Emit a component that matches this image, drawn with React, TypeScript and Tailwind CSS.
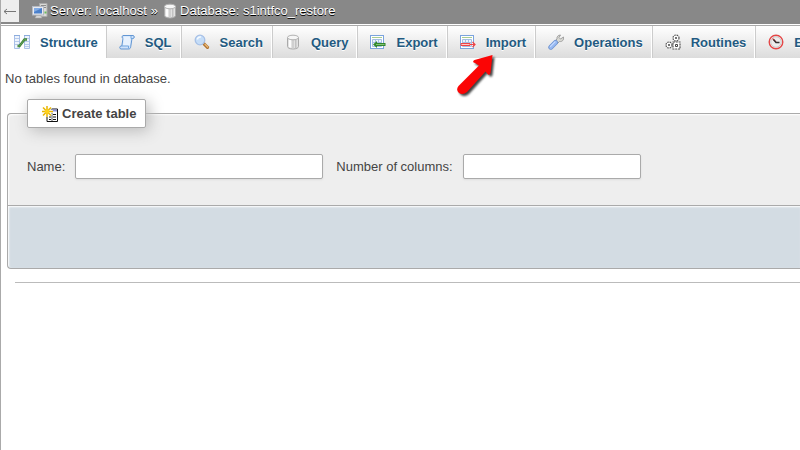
import type { ReactNode } from "react";

function Svg({ children }: { children: ReactNode }) {
  return (
    <svg width="16" height="16" viewBox="0 0 16 16" className="shrink-0" aria-hidden>
      {children}
    </svg>
  );
}

function ServerIcon() {
  return (
    <Svg>
      <path d="M7.500 .5h7.500v13H9z" fill="#dcdcd8" stroke="#aaa" />
      <path d="M9 2.500h5M9 4.500h5" stroke="#8d8d8d" />
      <path d="M12.500 8.500h2v2h-2z" fill="#6aba5c" />
      <rect x=".5" y="3.500" width="11" height="8.500" fill="#e9eaee" stroke="#b5bac4" />
      <rect x="2" y="5" width="8" height="5.500" fill="#4a80cb" />
      <path d="M2 5h8L2 9z" fill="#82abe4" />
      <path d="M4.500 12.500h4l1.500 2.500H3z" fill="#d5d5d5" stroke="#aaa" strokeWidth=".5" />
    </Svg>
  );
}

function DatabaseIcon() {
  return (
    <Svg>
      <path d="M2.500 3.500v9c0 1.500 2.300 2.500 5.500 2.500s5.500-1 5.500-2.500v-9" fill="#e2e2e2" stroke="#aaa" />
      <path d="M4 5.500h2v8.300l-2-.8z" fill="#fcfcfc" />
      <path d="M7 6h2v8.500H7z" fill="#d0d0d0" />
      <path d="M10 6h1.500v8H10z" fill="#c2c2c2" />
      <ellipse cx="8" cy="3.500" rx="5.500" ry="2.300" fill="#f6f6f6" stroke="#b2b2b2" />
    </Svg>
  );
}

function StructureIcon() {
  return (
    <Svg>
      <path d="M.5 1.500h5v13h-5zM10.500 1.500h5v13h-5z" fill="#eef4fd" stroke="#a9c0e8" />
      <path d="M0 1.500h6M10 1.500h6" stroke="#8cacdd" />
      <path d="M1 4.500h4M1 7.500h4M1 10.500h4M11 4.500h4M11 7.500h4M11 10.500h4M11 12.500h4" stroke="#b7cbea" />
      <path d="M3.500 12h2L10.500 5.500H13" fill="none" stroke="#3f8237" strokeWidth="2.400" />
      <path d="M4 12h1.500L10.500 5.500H12.500" fill="none" stroke="#6aa862" strokeWidth=".8" />
    </Svg>
  );
}

function SqlIcon() {
  return (
    <Svg>
      <path
        d="M4 1.500h10c1.700 0 1.700 3 0 3H13l-1.300 8.300c-.2 1.500-.9 2.200-2 2.200H2c-1.700 0-1.700-3 0-3h.8L4 4.500c-1.300-.5-1.300-2.500 0-3z"
        fill="#cfe2fa"
        stroke="#6296d3"
      />
      <path d="M5 2.500h7L10.800 11.500H4z" fill="#e8f2fe" />
      <path d="M2.800 12h6.700v2.500M12 2v2.500h2" fill="none" stroke="#75a7df" />
    </Svg>
  );
}

function SearchIcon() {
  return (
    <Svg>
      <path d="M10 9.800l3.500 3.500" stroke="#b0722f" strokeWidth="3.200" strokeLinecap="round" />
      <path d="M11 10.300l2.700 2.700" stroke="#e6b878" strokeWidth="1.400" strokeLinecap="round" />
      <circle cx="6" cy="6" r="4.800" fill="#c5ddf8" stroke="#a6c0e6" strokeWidth="1.300" />
      <path d="M3.300 5.500a3.200 3.200 0 0 1 3.700-2.500" fill="none" stroke="#f4faff" strokeWidth="1.500" />
    </Svg>
  );
}

function SheetIcon({ incoming }: { incoming: boolean }) {
  return (
    <Svg>
      <rect x=".5" y="1.500" width="13" height="13" fill="#fff" stroke="#7ba4dd" />
      <path d="M2 3.500h10" stroke="#a9cd91" />
      <path d="M2.500 5.500h9v7h-9zM2.500 8.500h9M5.500 5.500v7M8.500 5.500v7" fill="#edf3fc" stroke="#a4bee4" />
      {incoming ? (
        <>
          <path d="M1 9.500h9v2H1z" fill="#ffc8c8" stroke="#f04444" />
          <path d="M10 10.500h5M12.500 8l2.500 2.500-2.500 2.500" fill="none" stroke="#f04444" strokeWidth="1.200" />
        </>
      ) : (
        <>
          <path d="M3 10.500l4-3.500v2h8.500v3H7v2z" fill="#33882e" />
          <path d="M6 10.500h8.500" stroke="#83c274" />
        </>
      )}
    </Svg>
  );
}

function WrenchIcon() {
  return (
    <Svg>
      <path
        d="M7 7L9 5c-.5-2 1-4 3.500-4L11 3.500 12.500 5 15.500 3c.7 3-1.500 5-4 4.500L9.500 9.500z"
        fill="#d9d9d4"
        stroke="#999"
        strokeWidth=".9"
      />
      <path d="M2.800 13.200L7.500 8.500" stroke="#7094d0" strokeWidth="5" strokeLinecap="round" />
      <path d="M2.800 13.200L7.500 8.500" stroke="#97b9f2" strokeWidth="3.400" strokeLinecap="round" />
      <path d="M2.500 12.300L7 7.800" stroke="#c7dcff" strokeWidth="1.200" strokeLinecap="round" />
    </Svg>
  );
}

function RoutinesIcon() {
  return (
    <Svg>
      <g fill="#fff" stroke="#555" strokeWidth="1.200">
        <circle cx="11" cy="4" r="3" strokeDasharray="1.600 .8" />
        <circle cx="4" cy="11" r="3" strokeDasharray="1.600 .8" />
        <rect x="8" y="8" width="7" height="7" strokeDasharray="2 .8" />
      </g>
      <path d="M10.500 3.500h1v1h-1zM3.500 10.500h1v1h-1zM10.500 10.500h2v2h-2z" fill="#fff" stroke="#444" />
    </Svg>
  );
}

function ClockIcon() {
  return (
    <Svg>
      <circle cx="8" cy="8" r="6.800" fill="#fff" stroke="#e44747" strokeWidth="1.400" />
      <circle cx="8" cy="8" r="5.300" fill="#ededed" stroke="#bbb" strokeWidth=".8" />
      <path d="M8 8L4.500 4.500" stroke="#e44747" strokeWidth="1.300" />
      <path d="M5.500 5.500L8 8.500h3.500" fill="none" stroke="#333" strokeWidth="1.400" />
    </Svg>
  );
}

function NewTableIcon() {
  return (
    <Svg>
      <path d="M5 3h10.500v12.500H5z" fill="#fff" stroke="#111" />
      <path d="M10 3.500h5v2h-5z" fill="#8b91d8" />
      <path d="M7 8.500h2M11 8.500h3M7 11h2M11 11h3M7 13.500h2M11 13.500h3" stroke="#111" />
      <path d="M10 6v9.500" stroke="#111" strokeWidth=".7" />
      <path d="M5 0v11M0 5.500h11M1 1.500l8 8M9 1.500l-8 8" stroke="#fff" strokeWidth="2.500" />
      <path d="M5 0v11M0 5.500h11M1 1.500l8 8M9 1.500l-8 8" stroke="#e8b500" strokeWidth="1.500" />
      <circle cx="5" cy="5.500" r="2.300" fill="#ffd21c" />
    </Svg>
  );
}

const tabs: { name: string; icon: ReactNode; active?: boolean }[] = [
  { name: "Structure", icon: <StructureIcon />, active: true },
  { name: "SQL", icon: <SqlIcon /> },
  { name: "Search", icon: <SearchIcon /> },
  { name: "Query", icon: <DatabaseIcon /> },
  { name: "Export", icon: <SheetIcon incoming={false} /> },
  { name: "Import", icon: <SheetIcon incoming /> },
  { name: "Operations", icon: <WrenchIcon /> },
  { name: "Routines", icon: <RoutinesIcon /> },
  { name: "Events", icon: <ClockIcon /> },
];

function PointerArrow() {
  return (
    <svg
      width="48"
      height="52"
      viewBox="0 0 48 52"
      aria-hidden
      className="pointer-events-none absolute top-full left-2 z-10 -mt-1 drop-shadow-[2px_2px_1px_rgba(0,0,0,0.75)]"
    >
      <path
        d="M37.500 1L19.500 6Q16.500 8 20 9L24 11.500 3.500 32Q.5 36 4 39Q8 41.500 12 38L30.500 17.500 33 20.500Q35 21.500 35.500 19Z"
        fill="#fb0505"
      />
    </svg>
  );
}

const field =
  "h-[25px] rounded-xs border border-[#aaa] bg-white px-1 text-[#444] shadow-[0_1px_2px_#ddd] outline-none";

export default function App() {
  return (
    <div className="min-h-screen overflow-hidden border-l border-[#aaa] bg-white font-['Liberation_Sans',Arial,sans-serif] text-[13px] leading-4 text-[#444]">
      <header className="flex h-6 items-start bg-[#888] text-white [text-shadow:0_1px_0_#000]">
        <button
          type="button"
          aria-label="Hide panel"
          className="flex h-[22px] w-[18px] shrink-0 items-center justify-center bg-[#eee]"
        >
          <svg width="14" height="9" viewBox="0 0 14 9" fill="none" stroke="#777" aria-hidden>
            <path d="M1 4.500h12M4 2L1 4.500 4 7" />
          </svg>
        </button>
        <nav aria-label="Location" className="ml-[13px] flex items-center whitespace-nowrap pt-[3px]">
          <a href="#server" className="flex items-center gap-0.5">
            <ServerIcon />
            Server: localhost
          </a>
          <span className="mx-1">»</span>
          <a href="#database" className="flex items-center gap-0.5">
            <DatabaseIcon />
            Database: s1intfco_restore
          </a>
        </nav>
      </header>

      <nav aria-label="Database" className="mt-px border-t border-[#aaa]">
        <ul className="flex">
          {tabs.map((t) => (
            <li key={t.name} className="relative shrink-0">
              <a
                href={"#" + t.name.toLowerCase()}
                className={
                  "flex h-8 items-center gap-2.5 whitespace-nowrap border-l pr-2 pl-3 font-bold text-[#235a81] [text-shadow:0_1px_0_#fff] " +
                  (t.active
                    ? "border-l-white bg-white"
                    : "border-r border-l-[#ccc] border-r-white bg-linear-to-b from-white to-[#dcdcdc]")
                }
              >
                {t.icon}
                <span className="pt-0.5">{t.name}</span>
              </a>
              {t.name === "Import" && <PointerArrow />}
            </li>
          ))}
        </ul>
      </nav>

      <main>
        <p className="mt-[13px] ml-1">No tables found in database.</p>
        <form className="mt-3 ml-1.5">
          <fieldset className="rounded-tl border-t border-l border-[#aaa] bg-[#eee] shadow-[inset_1px_1px_2px_#fff]">
            <legend className="ml-[19px] flex items-center gap-1 rounded-xs border border-[#aaa] bg-white pt-1.5 pr-[9px] pb-[5px] pl-3.5 font-bold shadow-[3px_3px_15px_#bbb]">
              <NewTableIcon />
              Create table
            </legend>
            <div className="flex items-center whitespace-nowrap py-[26px] pl-[19px]">
              <label htmlFor="table-name">Name:</label>
              <input id="table-name" type="text" className={"ml-2.5 w-[248px] " + field} />
              <label htmlFor="column-count" className="ml-[13px]">
                Number of columns:
              </label>
              <input id="column-count" type="text" className={"ml-2.5 w-[178px] " + field} />
            </div>
          </fieldset>
          <div className="h-16 rounded-bl border-t border-b border-l border-[#aaa] bg-[#d3dce3] shadow-[inset_1px_1px_2px_#fff]" />
        </form>
        <hr className="mt-[13px] ml-3.5 border-[#bbb]" />
      </main>
    </div>
  );
}
